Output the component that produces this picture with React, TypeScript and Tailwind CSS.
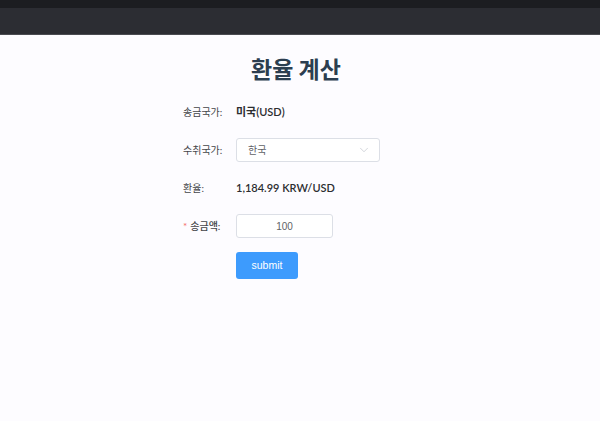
import { ChevronDown } from "lucide-react";

const font = { fontFamily: 'Lato, "Noto Sans CJK KR", sans-serif' };
const arial = { fontFamily: '"Liberation Sans", "Noto Sans CJK KR", sans-serif' };

function Row({ label, required, children }: { label: string; required?: boolean; children: React.ReactNode }) {
  return (
    <div className="flex h-[24px] items-center">
      <div className={`w-[53px] shrink-0 text-left text-[10px] text-[#444549] ${required ? "font-medium text-[#36373b]" : ""}`}>
        {required && <span className="mr-[3px] text-[#f56c6c]">*</span>}
        {label}
      </div>
      <div className="flex items-center">{children}</div>
    </div>
  );
}

export default function App() {
  return (
    <div className="min-h-[421px] w-full bg-[#fdfcff]" style={font}>
      {/* top bar */}
      <div className="h-[8px] bg-[#1c1d21]" />
      <div className="h-[26px] bg-[#2c2d33]" />
      <div className="h-[1px] bg-[#4a4b51]" />

      <h1 className="mt-[16px] mb-[14px] h-[35px] text-center text-[23px] font-bold leading-[35px] text-[#2c3e50] -translate-x-[4px]" style={{ fontFamily: '"Noto Sans CJK KR", sans-serif' }}>
        환율 계산
      </h1>

      <div className="ml-[183px] flex flex-col gap-[14px]">
        <Row label="송금국가:">
          <span className="text-[11px] font-semibold text-[#2c2d30]">미국(USD)</span>
        </Row>

        <Row label="수취국가:">
          <div className="flex h-[24px] w-[144px] items-center justify-between rounded-[3px] border border-[#dcdfe6] bg-white pl-[11px] pr-[8px]">
            <span className="text-[10px] text-[#606266]" style={arial}>한국</span>
            <ChevronDown className="h-[14px] w-[14px] text-[#c0c4cc]" strokeWidth={1.2} />
          </div>
        </Row>

        <Row label="환율:">
          <span className="text-[11px] font-semibold text-[#2c2d30]">1,184.99 KRW/USD</span>
        </Row>

        <Row label="송금액:" required>
          <div className="flex h-[24px] w-[97px] items-center justify-center rounded-[3px] border border-[#dcdfe6] bg-white">
            <span className="text-[10px] text-[#606266]" style={arial}>100</span>
          </div>
        </Row>

        <div className="flex h-[27px] items-center">
          <button className="ml-[53px] h-[27px] w-[62px] rounded-[3px] bg-[#3d9bfd] text-[10.5px] text-white" style={arial}>
            submit
          </button>
        </div>
      </div>
    </div>
  );
}
